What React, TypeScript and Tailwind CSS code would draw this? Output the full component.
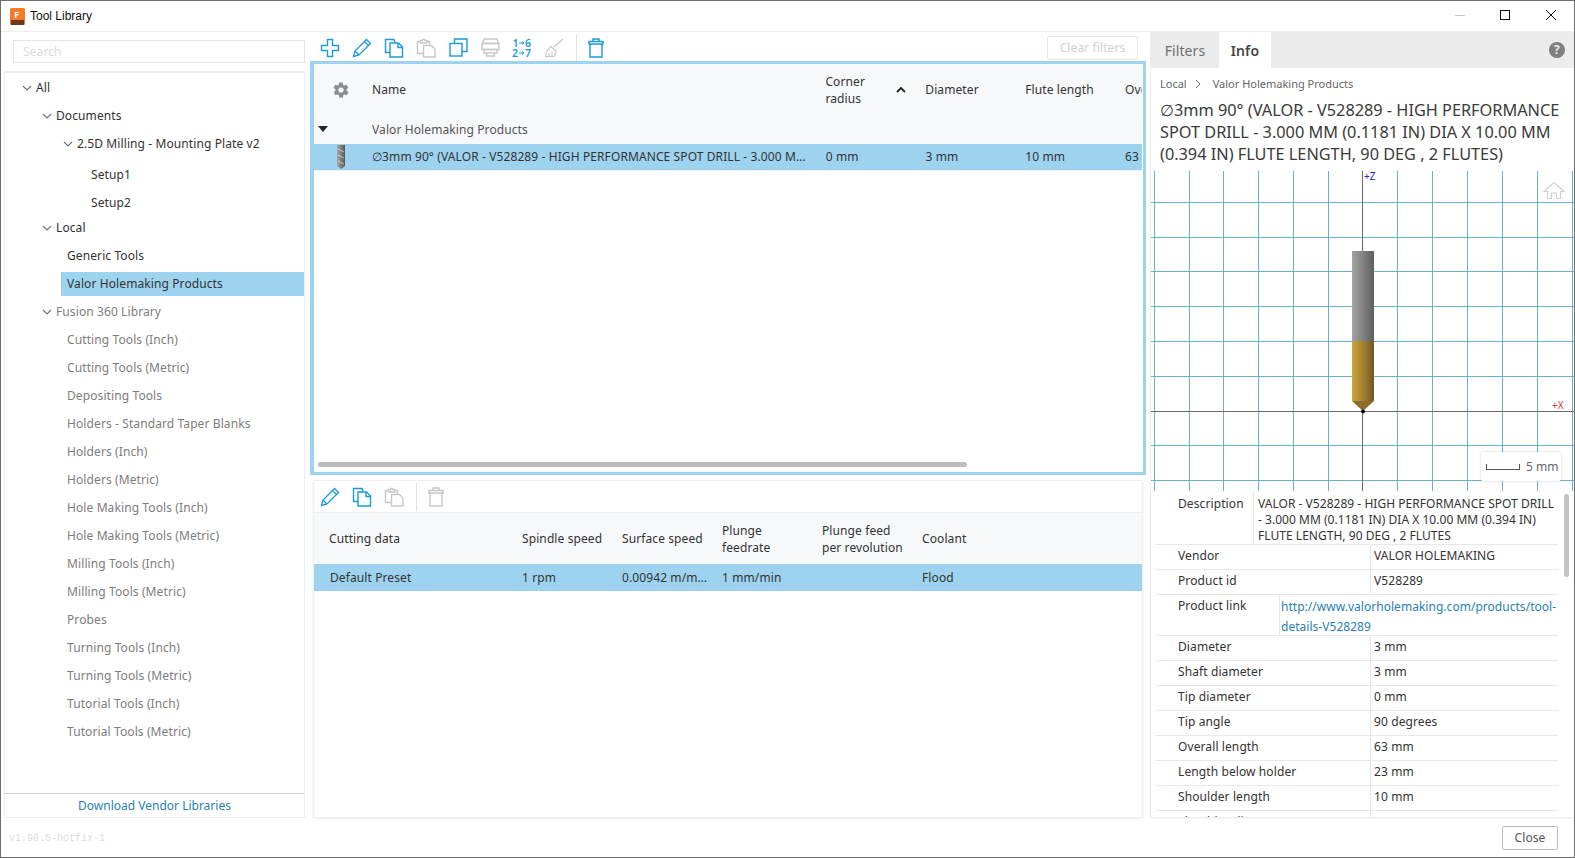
import type { ReactNode } from 'react';

const FONT = 'font-["Noto_Sans",sans-serif]';

const BLUE = '#1a9ad9';
const GREY = '#c8c8c8';

function PlusIcon() {
  return (
    <svg width="20" height="20" viewBox="0 0 20 20" fill="none" stroke={BLUE} strokeWidth="1.4">
      <path d="M7.5 1.5h5v6h6v5h-6v6h-5v-6h-6v-5h6z" />
    </svg>
  );
}

function PencilIcon() {
  return (
    <svg width="20" height="20" viewBox="0 0 20 20" fill="none" stroke={BLUE} strokeWidth="1.3">
      <path d="M1.5 18.5l1.5-5.5L14.5 1.5l4 4L7 17z" />
      <path d="M3 13l4 4M12.5 3.5l4 4" />
    </svg>
  );
}

function CopyIcon({ color = BLUE }: { color?: string }) {
  return (
    <svg width="20" height="20" viewBox="0 0 20 20" fill="none" stroke={color} strokeWidth="1.4">
      <path d="M6 14.5H1.5V1.5h8.5l1 3" />
      <path d="M6 5h8.5l4 4v10H6z" />
      <path d="M14 5v4.5h4.5" />
    </svg>
  );
}

function PasteIcon() {
  return (
    <svg width="21" height="20" viewBox="0 0 21 20" fill="none" stroke={GREY} strokeWidth="1.4">
      <path d="M7 15.5H1.5V3.5h3M10.5 3.5h3V7" />
      <path d="M4.5 5V2.5h2a1.2 1.2 0 0 1 2.5 0h2V5z" />
      <path d="M7.5 7.5h8l3.5 3.5v8H7.5z" />
    </svg>
  );
}

function DuplicateIcon() {
  return (
    <svg width="19" height="19" viewBox="0 0 19 19" fill="none" stroke={BLUE} strokeWidth="1.4">
      <rect x="1" y="5.5" width="12" height="12.5" />
      <path d="M5.5 5.5V1h12.5v12.5h-5" />
    </svg>
  );
}

function HolderIcon() {
  return (
    <svg width="19" height="19" viewBox="0 0 19 19" fill="none" stroke={GREY} strokeWidth="1.4">
      <path d="M3 1h13l1.5 4.5h-16z" />
      <rect x="1" y="5.5" width="17" height="6" />
      <path d="M3 11.5h13V15H3zM5.5 15h8v3h-8z" />
    </svg>
  );
}

function NumberingIcon() {
  const font = { fontSize: 10.5, fontWeight: 600, fontFamily: 'Noto Sans, sans-serif' };
  return (
    <svg className="overflow-visible" width="20" height="20" viewBox="0 0 20 20" fill={BLUE}>
      <text x="0.5" y="9" {...font}>1</text>
      <path d="M7 5h5M10.2 3.4l1.8 1.6-1.8 1.6" fill="none" stroke={BLUE} strokeWidth="1" />
      <text x="13" y="9" {...font}>6</text>
      <text x="0" y="19" {...font}>2</text>
      <path d="M7 15h5M10.2 13.4l1.8 1.6-1.8 1.6" fill="none" stroke={BLUE} strokeWidth="1" />
      <text x="13" y="19" {...font}>7</text>
    </svg>
  );
}

function BroomIcon() {
  return (
    <svg width="20" height="20" viewBox="0 0 20 20" fill="none" stroke={GREY} strokeWidth="1.2">
      <path d="M19 1L10 9" />
      <path d="M7 8.5l5 4.5c-.5 2.5-1 4-1.5 5.5H1.5C2 14 4 10.5 7 8.5z" />
      <path d="M5 18v-3M8 18v-4" />
    </svg>
  );
}

function TrashIcon({ color = BLUE }: { color?: string }) {
  return (
    <svg width="16" height="20" viewBox="0 0 16 20" fill="none" stroke={color} strokeWidth="1.4">
      <path d="M1 3.5h14V6H1zM5 3.5V1h6v2.5" />
      <path d="M2 6v13h12V6" />
    </svg>
  );
}

function Chevron() {
  return (
    <svg className="block" width="10" height="6" viewBox="0 0 10 6" fill="none" stroke="#707070" strokeWidth="1.1">
      <path d="M1 1l4 4 4-4" />
    </svg>
  );
}

function ToolThumb() {
  return (
    <svg width="8" height="24" viewBox="0 0 8 24">
      <defs>
        <linearGradient id="thumb" x1="0" x2="1" y1="0" y2="0">
          <stop offset="0" stopColor="#a9a9a9" />
          <stop offset="1" stopColor="#555" />
        </linearGradient>
      </defs>
      <path d="M0 0h8v21l-4 3-4-3z" fill="url(#thumb)" />
      <path d="M1 4l6 3M1 10l6 3M1 16l6 3" stroke="#e0e0e0" strokeWidth="0.7" />
    </svg>
  );
}

type TreeItem = {
  label: string;
  pad: number;
  chevron?: boolean;
  muted?: boolean;
  selected?: boolean;
  h?: string;
};

const tree: TreeItem[] = [
  { label: 'All', pad: 31, chevron: true },
  { label: 'Documents', pad: 51, chevron: true },
  { label: '2.5D Milling - Mounting Plate v2', pad: 72, chevron: true },
  { label: 'Setup1', pad: 86, h: 'h-[34px]' },
  { label: 'Setup2', pad: 86, h: 'h-[22px]' },
  { label: 'Local', pad: 51, chevron: true },
  { label: 'Generic Tools', pad: 62 },
  { label: 'Valor Holemaking Products', pad: 62, selected: true },
  { label: 'Fusion 360 Library', pad: 51, chevron: true, muted: true },
  ...[
    'Cutting Tools (Inch)',
    'Cutting Tools (Metric)',
    'Depositing Tools',
    'Holders - Standard Taper Blanks',
    'Holders (Inch)',
    'Holders (Metric)',
    'Hole Making Tools (Inch)',
    'Hole Making Tools (Metric)',
    'Milling Tools (Inch)',
    'Milling Tools (Metric)',
    'Probes',
    'Turning Tools (Inch)',
    'Turning Tools (Metric)',
    'Tutorial Tools (Inch)',
    'Tutorial Tools (Metric)',
  ].map((label) => ({ label, pad: 62, muted: true })),
];

function Sidebar() {
  return (
    <aside className="flex w-[309px] shrink-0 flex-col pl-[3px]">
      <div className="ml-[9px] mr-[5px] mt-[8px] h-[23px] border border-[#e6e6e6] px-[9px] text-[12px] leading-[21px] text-[#dcdcdc]">
        Search
      </div>
      <div className="mr-[5px] mt-[8px] flex h-[747px] flex-col border-x border-b border-t-2 border-[#e9eef3] bg-white">
        <div className="flex-1 pt-[1px]">
          {tree.map((item) => (
            <div key={item.label} className={`relative flex items-center ${item.h ?? 'h-[28px]'}`}>
              {item.selected && (
                <div className="absolute left-[56px] right-0 top-[2px] h-[24px] bg-[#9dd3ef]" />
              )}
              {item.chevron && (
                <span className="absolute top-[11px]" style={{ left: item.pad - 14 }}>
                  <Chevron />
                </span>
              )}
              <span
                className={`relative text-[12px] ${item.muted ? 'text-[#7d7d7d]' : 'text-[#333]'}`}
                style={{ marginLeft: item.pad }}
              >
                {item.label}
              </span>
            </div>
          ))}
        </div>
        <div className="flex h-[24px] items-center justify-center border-t border-[#cfcfcf] text-[12px] tracking-normal text-[#2a7fb5]">
          Download Vendor Libraries
        </div>
      </div>
    </aside>
  );
}

function Slot({ children }: { children: ReactNode }) {
  return <div className="flex w-[32px] justify-center">{children}</div>;
}

function ToolTable() {
  return (
    <div className="relative h-[414px] border-[3px] border-l-[4px] border-[#9dd3ef] bg-white pr-[1px]">
      <div className="flex h-[51px] items-center bg-[#f7f8fa] text-[12px] text-[#333] shadow-[0_1px_2px_rgba(0,0,0,0.05)]">
        <svg className="ml-[18px]" width="18" height="18" viewBox="0 0 24 24" fill="#8a8f94">
          <path d="M19.4 13c.1-.3.1-.7.1-1s0-.7-.1-1l2.1-1.6c.2-.2.2-.4.1-.6l-2-3.5c-.1-.2-.4-.3-.6-.2l-2.5 1c-.5-.4-1.1-.7-1.7-1l-.4-2.6c0-.3-.2-.5-.5-.5h-4c-.3 0-.5.2-.5.4l-.4 2.7c-.6.2-1.2.6-1.7 1l-2.5-1c-.2-.1-.5 0-.6.2l-2 3.5c-.1.2-.1.5.1.6L4.6 11c-.1.3-.1.7-.1 1s0 .7.1 1l-2.1 1.6c-.2.2-.2.4-.1.6l2 3.5c.1.2.4.3.6.2l2.5-1c.5.4 1.1.7 1.7 1l.4 2.6c0 .3.2.5.5.5h4c.3 0 .5-.2.5-.4l.4-2.7c.6-.2 1.2-.6 1.7-1l2.5 1c.2.1.5 0 .6-.2l2-3.5c.1-.2.1-.5-.1-.6zM12 15.5a3.5 3.5 0 1 1 0-7 3.5 3.5 0 0 1 0 7z" />
        </svg>
        <span className="ml-[22px] w-[454px]">Name</span>
        <span className="w-[64px] leading-[17px]">
          Corner
          <br />
          radius
        </span>
        <span className="flex w-[24px] justify-center">
          <svg width="10" height="6" viewBox="0 0 10 6" fill="none" stroke="#222" strokeWidth="1.8">
            <path d="M1 5l4-4 4 4" />
          </svg>
        </span>
        <span className="ml-[12px] w-[100px]">Diameter</span>
        <span className="w-[100px]">Flute length</span>
        <span className="w-[17px] overflow-hidden whitespace-nowrap">Overall length</span>
      </div>
      <div className="relative flex h-[29px] items-center bg-[#f7f8fa] text-[12px] text-[#555]">
        <span className="absolute left-[4px] top-[11px] h-0 w-0 border-x-[5px] border-t-[6px] border-x-transparent border-t-[#222]" />
        <span className="ml-[58px]">Valor Holemaking Products</span>
      </div>
      <div className="flex h-[27px] items-center border-b border-[#eee] bg-[#9dd3ef] text-[12px] text-[#333]">
        <span className="ml-[23px] flex w-[8px]">
          <ToolThumb />
        </span>
        <span className="ml-[27px] w-[455px] truncate pr-[14px]">
          ∅3mm 90° (VALOR - V528289 - HIGH PERFORMANCE SPOT DRILL - 3.000 MM (0.1181 IN) DIA X 10.00 MM
        </span>
        <span className="w-[100px]">0 mm</span>
        <span className="w-[100px]">3 mm</span>
        <span className="w-[100px]">10 mm</span>
        <span className="w-[17px] overflow-hidden whitespace-nowrap">63 mm</span>
      </div>
      <div className="absolute bottom-[5px] left-[4px] h-[5px] w-[649px] rounded-full bg-[#bdbdbd]" />
    </div>
  );
}

function CuttingPanel() {
  return (
    <div className="ml-[3px] mr-[3px] mt-[5px] flex flex-1 flex-col border-x border-b border-t border-[#eef0f2] bg-white shadow-[0_1px_2px_rgba(0,0,0,0.08)]">
      <div className="flex h-[32px] shrink-0 items-center border-b border-[#eee]">
        <Slot>
          <PencilIcon />
        </Slot>
        <Slot>
          <CopyIcon />
        </Slot>
        <Slot>
          <PasteIcon />
        </Slot>
        <div className="mx-[6px] h-[28px] w-px bg-[#e2e2e2]" />
        <div className="ml-[5px]">
          <TrashIcon color={GREY} />
        </div>
      </div>
      <div className="flex h-[51px] shrink-0 items-center bg-[#f7f8fa] pl-[15px] text-[12px] leading-[17px] text-[#333]">
        <span className="w-[193px]">Cutting data</span>
        <span className="w-[100px]">Spindle speed</span>
        <span className="w-[100px]">Surface speed</span>
        <span className="w-[100px]">
          Plunge
          <br />
          feedrate
        </span>
        <span className="w-[100px]">
          Plunge feed
          <br />
          per revolution
        </span>
        <span>Coolant</span>
      </div>
      <div className="flex h-[27px] shrink-0 items-center bg-[#9dd3ef] pl-[16px] text-[12px] text-[#333]">
        <span className="w-[192px]">Default Preset</span>
        <span className="w-[100px]">1 rpm</span>
        <span className="w-[100px] truncate pr-[14px]">0.00942 m/min</span>
        <span className="w-[200px]">1 mm/min</span>
        <span>Flood</span>
      </div>
    </div>
  );
}

const gridX = [3, 38, 72, 107, 142, 177, 246, 281, 316, 351, 386, 421];
const gridY = [31, 66, 100, 135, 170, 205, 274, 309];

function Viewport() {
  return (
    <div className="relative h-[320px] shrink-0 overflow-hidden">
      <svg className="block" width="424" height="320" viewBox="0 0 424 320">
        <defs>
          <linearGradient id="shank" x1="0" x2="1" y1="0" y2="0">
            <stop offset="0" stopColor="#a3a3a3" />
            <stop offset="0.45" stopColor="#858585" />
            <stop offset="1" stopColor="#5e5e5e" />
          </linearGradient>
          <linearGradient id="flute" x1="0" x2="1" y1="0" y2="0">
            <stop offset="0" stopColor="#cda53f" />
            <stop offset="0.45" stopColor="#a98632" />
            <stop offset="1" stopColor="#6f5a25" />
          </linearGradient>
        </defs>
        {gridX.map((x) => (
          <line key={x} x1={x + 0.5} x2={x + 0.5} y1="0" y2="320" stroke="#6cb0cd" />
        ))}
        {gridY.map((y) => (
          <line key={y} x1="0" x2="424" y1={y + 0.5} y2={y + 0.5} stroke="#6cb0cd" />
        ))}
        <line x1="0" x2="424" y1="240.5" y2="240.5" stroke="#6a6a6a" />
        <line x1="211.5" x2="211.5" y1="0" y2="320" stroke="#6a6a6a" />
        <rect x="201" y="80" width="22" height="90" fill="url(#shank)" />
        <rect x="201" y="170" width="22" height="60" fill="url(#flute)" />
        <path d="M201 230h22l-11 10z" fill="#8a6d2b" />
        <circle cx="212" cy="240.5" r="2" fill="#000" />
        <path
          d="M393 20.5L403 11.5L413 20.5H409.5V27.5H405.5V22H400.5V27.5H396.5V20.5Z"
          fill="white"
          stroke="#ccd1d4"
          strokeWidth="1.2"
        />
      </svg>
      <span className="absolute left-[213px] top-[-2px] text-[10px] text-[#2222dd]">+Z</span>
      <span className="absolute left-[401px] top-[227px] text-[10px] text-[#e8333a]">+X</span>
      <div className="absolute left-[330px] top-[281px] flex h-[29px] w-[80px] items-center rounded-[2px] bg-white pl-[5px] text-[12px] text-[#666] shadow-[0_0_3px_rgba(0,0,0,0.18)]">
        <span className="h-[6px] w-[34px] border-x border-b border-[#555]" />
        <span className="ml-[6px] tracking-normal">5 mm</span>
      </div>
    </div>
  );
}

const props: [string, string][] = [
  ['Diameter', '3 mm'],
  ['Shaft diameter', '3 mm'],
  ['Tip diameter', '0 mm'],
  ['Tip angle', '90 degrees'],
  ['Overall length', '63 mm'],
  ['Length below holder', '23 mm'],
  ['Shoulder length', '10 mm'],
];

function PropRow({ label, value }: { label: string; value: string }) {
  return (
    <div className="flex h-[25px] border-b border-[#e8e8e8] text-[12px]">
      <span className="w-[214px] pl-[22px] leading-[21px]">{label}</span>
      <span className="border-l border-[#e8e8e8] pl-[3px] leading-[21px]">{value}</span>
    </div>
  );
}

function InfoPanel() {
  return (
    <aside className="flex w-[424px] shrink-0 flex-col border-l border-[#eee]">
      <div className="flex h-[36px] shrink-0 items-stretch bg-[#ececec] text-[14px]">
        <span className="flex w-[68px] items-center justify-center text-[#6e6e6e]">Filters</span>
        <span className="flex w-[52px] items-center justify-center bg-white font-semibold text-[#444]">Info</span>
        <span className="ml-auto mr-[9px] mt-[10px] flex h-[16px] w-[16px] items-center justify-center rounded-full bg-[#808080] text-[12px] font-bold leading-none text-[#ececec]">
          ?
        </span>
      </div>
      <div className="flex h-[31px] shrink-0 items-center pl-[9px] pt-[1px] text-[11px] tracking-normal text-[#666]">
        <span>Local</span>
        <svg className="ml-[8px] mr-[12px]" width="6" height="10" viewBox="0 0 6 10" fill="none" stroke="#666">
          <path d="M1 1l4 4-4 4" />
        </svg>
        <span>Valor Holemaking Products</span>
      </div>
      <h1 className="h-[72px] shrink-0 whitespace-nowrap pl-[9px] text-[16.3px] font-normal leading-[22px] tracking-normal text-[#3a3a3a]">
        ∅3mm 90° (VALOR - V528289 - HIGH PERFORMANCE
        <br />
        SPOT DRILL - 3.000 MM (0.1181 IN) DIA X 10.00 MM
        <br />
        (0.394 IN) FLUTE LENGTH, 90 DEG , 2 FLUTES)
      </h1>
      <Viewport />
      <div className="relative h-[326px] overflow-hidden pl-[5px] text-[#333] shadow-[0_1px_2px_rgba(0,0,0,0.1)]">
        <div className="w-[402px]">
          <div className="flex h-[54px] border-b border-[#e8e8e8] text-[12px]">
            <span className="w-[97px] pl-[22px] pt-[2px] leading-[21px]">Description</span>
            <span className="flex-1 border-l border-[#e8e8e8] pl-[4px] pt-[5px] leading-[16px] tracking-[0.03px]">
              VALOR - V528289 - HIGH PERFORMANCE SPOT DRILL - 3.000 MM (0.1181 IN) DIA X 10.00 MM (0.394 IN) FLUTE LENGTH, 90 DEG , 2 FLUTES
            </span>
          </div>
          <PropRow label="Vendor" value="VALOR HOLEMAKING" />
          <PropRow label="Product id" value="V528289" />
          <div className="flex h-[41px] border-b border-[#e8e8e8] text-[12px]">
            <span className="w-[123px] pl-[22px] leading-[21px]">Product link</span>
            <span className="flex-1 border-l border-[#e8e8e8] pl-[1px] pt-[2px] leading-[20px] tracking-[0.03px] text-[#2a7fb5]">
              http://www.valorholemaking.com/products/tool-details-V528289
            </span>
          </div>
          {props.map(([label, value]) => (
            <PropRow key={label} label={label} value={value} />
          ))}
          <PropRow label="Shoulder diameter" value="3 mm" />
        </div>
        <div className="absolute right-[5px] top-[3px] h-[83px] w-[5px] rounded-full bg-[#c4c4c4]" />
      </div>
    </aside>
  );
}

export default function App() {
  return (
    <div className={`flex h-[858px] w-[1575px] flex-col overflow-hidden border border-[#6e6e6e] bg-white tracking-[0.1px] ${FONT}`}>
      <header className="relative flex h-[31px] shrink-0 items-center border-b border-[#eee] pl-[9px] text-[12px] text-[#111]">
        <svg width="15" height="17" viewBox="0 0 15 17">
          <rect x="0" y="0" width="15" height="17" rx="1.5" fill="#f47b28" />
          <rect x="1" y="12" width="13" height="5" fill="#6b3a1c" />
          <text x="4" y="10" fontSize="9.5" fontWeight="700" fill="#fff" fontFamily="Noto Sans, sans-serif">F</text>
        </svg>
        <span className='ml-[5px] font-["Liberation_Sans",sans-serif] tracking-normal'>Tool Library</span>
        <div className="absolute right-[18px] top-[9px] flex items-center">
          <span className="mr-[35px] h-px w-[10px] bg-[#c4c4c4]" />
          <span className="mr-[36px] h-[10px] w-[10px] border border-[#111]" />
          <svg width="10" height="10" viewBox="0 0 10 10" stroke="#111">
            <path d="M0 0l10 10M10 0L0 10" />
          </svg>
        </div>
      </header>
      <div className="flex h-[786px] shrink-0">
        <Sidebar />
        <main className="flex w-[836px] shrink-0 flex-col">
          <div className="flex h-[29px] shrink-0 items-center pl-[4px] pt-[2px]">
            <div className="flex items-center">
              <Slot>
                <PlusIcon />
              </Slot>
              <Slot>
                <PencilIcon />
              </Slot>
              <Slot>
                <CopyIcon />
              </Slot>
              <Slot>
                <PasteIcon />
              </Slot>
              <Slot>
                <DuplicateIcon />
              </Slot>
              <Slot>
                <HolderIcon />
              </Slot>
              <Slot>
                <NumberingIcon />
              </Slot>
              <Slot>
                <BroomIcon />
              </Slot>
              <div className="ml-[6px] mr-[11px] h-[28px] w-px bg-[#e2e2e2]" />
              <TrashIcon />
            </div>
            <span className="ml-auto mr-[8px] flex h-[24px] w-[91px] items-center justify-center rounded-[2px] border border-[#e8e8e8] text-[12px] text-[#d0d0d0]">
              Clear filters
            </span>
          </div>
          <ToolTable />
          <CuttingPanel />
        </main>
        <div className="w-[4px] shrink-0" />
        <InfoPanel />
      </div>
      <footer className="flex flex-1 items-center justify-between pl-[8px] pr-[16px]">
        <span className='mt-[2px] font-["Liberation_Mono",monospace] text-[10px] tracking-normal text-[#dddddd]'>v1.90.5-hotfix-1</span>
        <span className="flex h-[24px] w-[56px] items-center justify-center rounded-[2px] border border-[#bdbdbd] text-[12px] text-[#555]">
          Close
        </span>
      </footer>
    </div>
  );
}
